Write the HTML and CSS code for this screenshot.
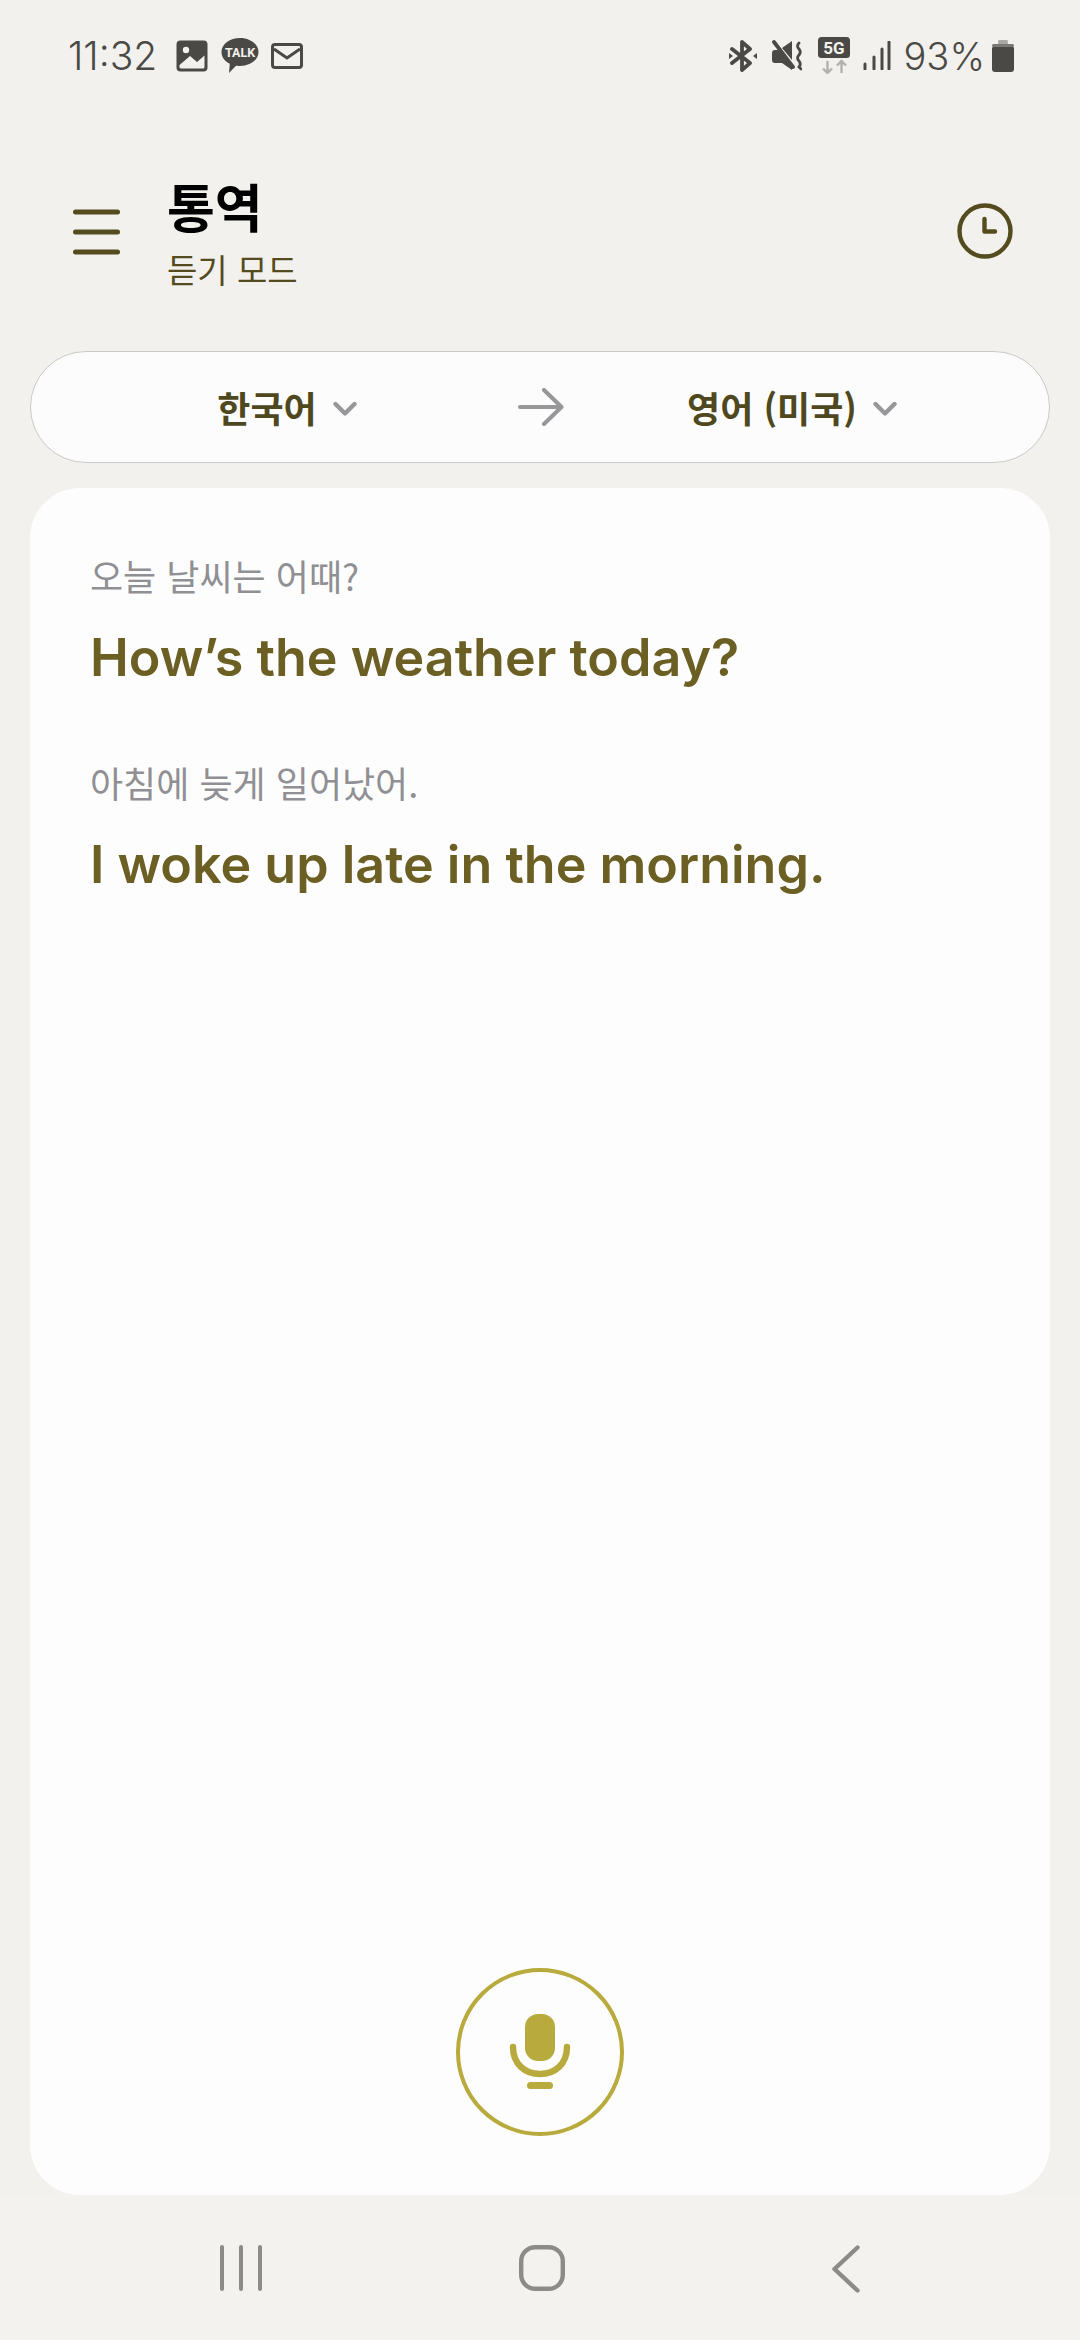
FILE: index.html
```html
<!DOCTYPE html>
<html lang="ko">
<head>
  <meta charset="UTF-8">
  <meta name="viewport" content="width=device-width, initial-scale=1.0">
  <title>통역</title>
  <link rel="stylesheet" href="styles.css">
</head>
<body>
  <div class="status-bar">
    <div class="status-left">
      <span class="status-time">11:32</span>
      <svg class="icon-picture" width="32" height="32" viewBox="0 0 32 32">
        <rect x="0.5" y="0.5" width="31" height="31" rx="4" fill="#4a4945"/>
        <circle cx="10" cy="10" r="3.2" fill="#f2f1ed"/>
        <path d="M3.5 25 L3.5 27 Q3.5 28.5 5 28.5 L27 28.5 Q28.5 28.5 28.5 27 L28.5 15.5 L21 22 L14 16 Z" fill="#f2f1ed"/>
      </svg>
      <svg class="icon-talk" width="38" height="36" viewBox="0 0 38 36">
        <path d="M19 0 C29 0 37.500 6 37.500 14 C37.500 22 29 28 19 28 C18 28 17 28 15 27.800 L8 35 L8.800 25.800 C3.500 23.300 0.500 19 0.500 14 C0.500 6 9 0 19 0 Z" fill="#4a4945"/>
        <text x="19" y="19" class="talk-label" text-anchor="middle">TALK</text>
      </svg>
      <svg class="icon-mail" width="32" height="26" viewBox="0 0 32 26">
        <rect x="1.500" y="1.500" width="29" height="23" rx="2.500" fill="none" stroke="#4a4945" stroke-width="3"/>
        <path d="M3 6 L16 15 L29 6" fill="none" stroke="#4a4945" stroke-width="3"/>
      </svg>
    </div>
    <div class="status-right">
      <svg class="icon-bt" width="28" height="32" viewBox="0 0 28 32">
        <path d="M3 9 L21 23 L13 30 L13 2 L21 9 L3 23" fill="none" stroke="#4a4945" stroke-width="3.800" stroke-linecap="round" stroke-linejoin="round"/>
        <path d="M0 13 L4 16 L0 19 Z M28 13 L24 16 L28 19 Z" fill="#4a4945"/>
      </svg>
      <svg class="icon-mute" width="30" height="31" viewBox="0 0 30 31">
        <path d="M0 13 Q0 10 3 10 L6 10 L20 27 L20 30 L10 23 L3 23 Q0 23 0 20 Z M10 8 L20 1 L20 20 Z" fill="#4a4945"/>
        <path d="M2 2 L21 27" stroke="#4a4945" stroke-width="3.800" stroke-linecap="round"/>
        <path d="M27 3 Q24 6 27 9 Q29.500 12 27 15 Q24 18 27 21 Q29.500 24 27 27 L29 29" fill="none" stroke="#4a4945" stroke-width="2.800" stroke-linecap="round"/>
      </svg>
      <svg class="icon-5g" width="32" height="37" viewBox="0 0 32 37">
        <rect x="0" y="0" width="32" height="21" rx="3.500" fill="#4a4945"/>
        <text x="16" y="16.500" class="net-label" text-anchor="middle">5G</text>
        <path d="M9.500 24 L9.500 36 M5 31.500 L9.500 36 L14 31.500 M23.500 36 L23.500 24 M19 28.500 L23.500 24 L28 28.500" fill="none" stroke="#b2b1ad" stroke-width="2.400"/>
      </svg>
      <svg class="icon-signal" width="28" height="29" viewBox="0 0 28 29">
        <path d="M2 23 L2 28 M11 16 L11 28 M19 8 L19 28 M26 1 L26 28" stroke="#4a4945" stroke-width="3" stroke-linecap="round"/>
      </svg>
      <span class="status-battery">93%</span>
      <svg class="icon-battery" width="22" height="32" viewBox="0 0 22 32">
        <path d="M6.500 0 L15.500 0 L16 4 L6 4 Z" fill="#a9a8a4"/>
        <rect x="0" y="6" width="22" height="26" rx="3" fill="#4a4945"/>
        <rect x="0" y="4" width="22" height="3" rx="1.500" fill="#7a7975"/>
      </svg>
    </div>
  </div>

  <div class="app-header">
    <svg class="icon-menu" width="47" height="46" viewBox="0 0 47 46">
      <path d="M2.500 3 L44.500 3 M2.500 23 L44.500 23 M2.500 43 L44.500 43" stroke="#544c1f" stroke-width="5" stroke-linecap="round"/>
    </svg>
    <div class="header-titles">
      <h1>통역</h1>
      <p>듣기 모드</p>
    </div>
    <svg class="icon-history" width="56" height="56" viewBox="0 0 56 56">
      <circle cx="28" cy="28" r="25.500" fill="none" stroke="#544c1f" stroke-width="4.400"/>
      <path d="M27.500 16 L27.500 28.500 L38 28.500" fill="none" stroke="#544c1f" stroke-width="4.400" stroke-linecap="round" stroke-linejoin="round"/>
    </svg>
  </div>

  <div class="lang-bar">
    <div class="lang-select">
      <span>한국어</span>
      <svg width="24" height="16" viewBox="0 0 24 16"><path d="M2.500 3 L12 12.500 L21.500 3" fill="none" stroke="#97979a" stroke-width="4.400" stroke-linecap="round" stroke-linejoin="round"/></svg>
    </div>
    <svg class="icon-arrow" width="46" height="38" viewBox="0 0 46 38">
      <path d="M2 19 L43 19 M26 2 L43.500 19 L26 36" fill="none" stroke="#97979a" stroke-width="4" stroke-linecap="round" stroke-linejoin="round"/>
    </svg>
    <div class="lang-select">
      <span>영어 (미국)</span>
      <svg width="24" height="16" viewBox="0 0 24 16"><path d="M2.500 3 L12 12.500 L21.500 3" fill="none" stroke="#97979a" stroke-width="4.400" stroke-linecap="round" stroke-linejoin="round"/></svg>
    </div>
  </div>

  <div class="card">
    <div class="phrase">
      <p class="source">오늘 날씨는 어때?</p>
      <p class="target">How’s the weather today?</p>
    </div>
    <div class="phrase">
      <p class="source">아침에 늦게 일어났어.</p>
      <p class="target">I woke up late in the morning.</p>
    </div>
    <div class="mic-btn">
      <svg width="62" height="76" viewBox="0 0 62 76">
        <rect x="16" y="0" width="30" height="47" rx="13" fill="#b8aa3c"/>
        <path d="M4 33 C4 50 16 60 31 60 C46 60 58 50 58 33" fill="none" stroke="#b8aa3c" stroke-width="6.400" stroke-linecap="round"/>
        <rect x="18" y="68" width="26" height="7" rx="3.500" fill="#b8aa3c"/>
      </svg>
    </div>
  </div>

  <div class="nav-bar">
    <svg class="nav-recent" width="42" height="46" viewBox="0 0 42 46">
      <path d="M2 2 L2 44 M21 2 L21 44 M40 2 L40 44" stroke="#8c8b87" stroke-width="4" stroke-linecap="round"/>
    </svg>
    <svg class="nav-home" width="46" height="46" viewBox="0 0 46 46">
      <rect x="2.200" y="2.200" width="41.600" height="41.600" rx="14" fill="none" stroke="#8c8b87" stroke-width="4.400"/>
    </svg>
    <svg class="nav-back" width="28" height="48" viewBox="0 0 28 48">
      <path d="M25.500 2.500 L2.500 24 L25.500 45.500" fill="none" stroke="#8c8b87" stroke-width="4.400" stroke-linecap="round" stroke-linejoin="round"/>
    </svg>
  </div>
</body>
</html>
```
FILE: styles.css
```css
body {
  margin: 0;
  width: 1080px;
  height: 2340px;
  display: flex;
  flex-direction: column;
  background-color: #f2f1ed;
  font-family: "Noto Sans CJK KR", "Noto Sans", sans-serif;
}

/* Status bar */
.status-bar {
  height: 37px;
  padding: 37px 66px 0 68px;
  display: flex;
  justify-content: space-between;
  align-items: center;
  color: #4a4945;
  font-family: Inter, sans-serif;
  font-weight: 300;
  font-size: 39px;
}

.status-left,
.status-right {
  display: flex;
  align-items: center;
}

.status-time {
  margin-right: 19px;
}

.icon-talk {
  margin-left: 13px;
}

.icon-mail {
  margin-left: 12px;
}

.talk-label {
  font-family: Roboto, sans-serif;
  font-size: 12.5px;
  font-weight: 700;
  fill: #f2f1ed;
}

.net-label {
  font-family: Roboto, sans-serif;
  font-size: 17px;
  font-weight: 700;
  fill: #f2f1ed;
}

.icon-mute {
  margin-left: 15px;
}

.icon-5g {
  margin-left: 16px;
}

.icon-signal {
  margin-left: 13px;
}

.status-battery {
  margin-left: 13px;
  font-size: 38px;
}

.icon-battery {
  margin-left: 7px;
}

/* Header */
.app-header {
  margin-top: 104px;
  padding: 0 67px 0 73px;
  display: flex;
  align-items: center;
}

.icon-menu {
  margin-right: 47px;
  margin-bottom: 5px;
}

.icon-history {
  margin-bottom: 8px;
}

.header-titles {
  flex: 1;
}

.header-titles h1 {
  margin: 0;
  font-size: 52px;
  line-height: 56px;
  font-weight: 700;
  color: #000;
}

.header-titles p {
  margin: 13px 0 0;
  font-size: 33px;
  line-height: 44px;
  color: #544c1f;
}

/* Language selector */
.lang-bar {
  margin: 60px 30px 0;
  height: 112px;
  box-sizing: border-box;
  border: 1px solid #c9c9c9;
  border-radius: 56px;
  background-color: #fcfcfc;
  display: grid;
  grid-template-columns: 448px 60px 442px;
  padding-left: 32px;
  align-items: center;
  justify-items: center;
}

.lang-select {
  display: flex;
  align-items: center;
  gap: 16px;
  font-size: 36px;
  font-weight: 700;
  color: #4f481f;
}

.lang-select svg {
  margin-top: 4px;
}

/* Translation card */
.card {
  flex: 1;
  margin: 25px 30px 0;
  padding: 62px 60px 59px;
  border-radius: 50px;
  background-color: #fdfdfd;
  display: flex;
  flex-direction: column;
}

.phrase + .phrase {
  margin-top: 65px;
}

.source {
  margin: 0;
  font-size: 36px;
  line-height: 50px;
  color: #8f8f94;
}

.target {
  margin: 24px 0 0;
  font-family: Inter, sans-serif;
  font-size: 52px;
  line-height: 68px;
  font-weight: 600;
  color: #6b5f24;
}

.mic-btn {
  margin-top: auto;
  align-self: center;
  width: 168px;
  height: 168px;
  box-sizing: border-box;
  border: 4px solid #b8aa3c;
  border-radius: 50%;
  display: flex;
  justify-content: center;
  align-items: center;
}

/* Navigation bar */
.nav-bar {
  height: 145px;
  background-color: #f3f2ee;
  box-sizing: border-box;
  padding: 50px 0 0 220px;
  display: flex;
  align-items: flex-start;
}

.nav-home {
  margin-left: 257px;
}

.nav-back {
  margin-left: 267px;
}
```
